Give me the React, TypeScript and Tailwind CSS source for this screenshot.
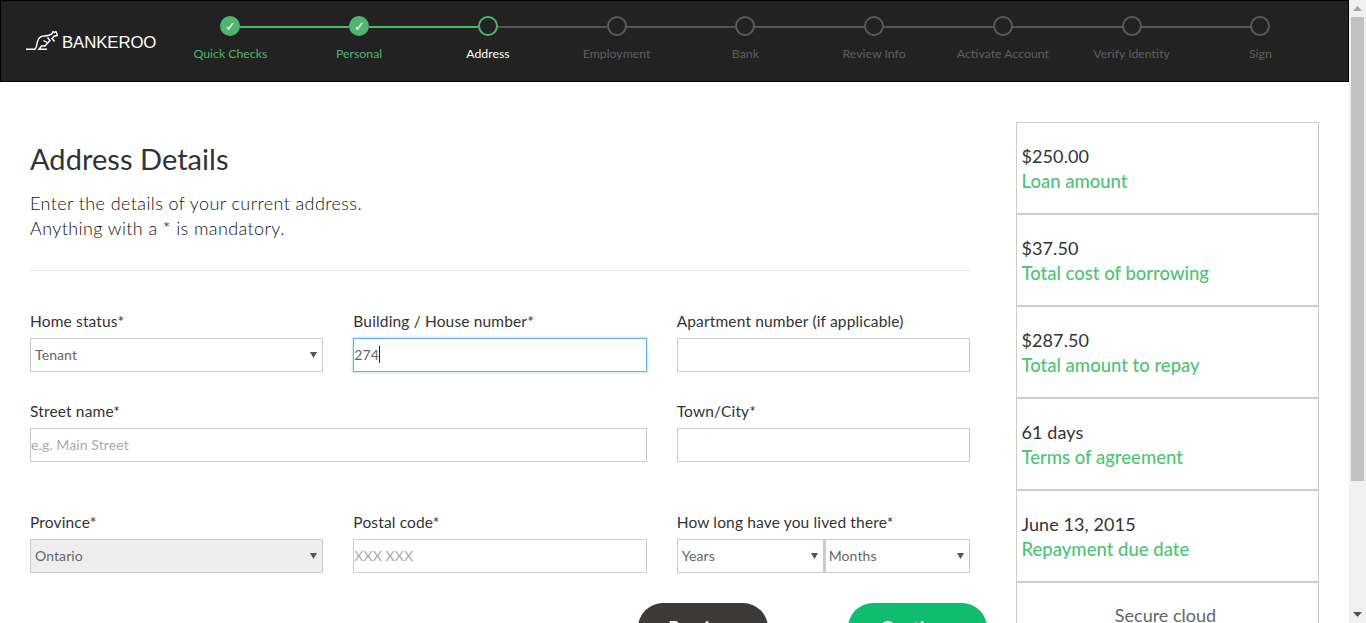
const steps = [
  { label: "Quick Checks", state: "done" },
  { label: "Personal", state: "done" },
  { label: "Address", state: "current" },
  { label: "Employment", state: "todo" },
  { label: "Bank", state: "todo" },
  { label: "Review Info", state: "todo" },
  { label: "Activate Account", state: "todo" },
  { label: "Verify Identity", state: "todo" },
  { label: "Sign", state: "todo" },
];

const summary = [
  { value: "$250.00", label: "Loan amount" },
  { value: "$37.50", label: "Total cost of borrowing" },
  { value: "$287.50", label: "Total amount to repay" },
  { value: "61 days", label: "Terms of agreement" },
  { value: "June 13, 2015", label: "Repayment due date" },
];

function Arrow() {
  return (
    <svg width="7" height="7" viewBox="0 0 7 7" className="shrink-0">
      <path d="M0 1h7L3.500 7z" fill="#555" />
    </svg>
  );
}

function Logo() {
  return (
    <svg width="32" height="20" viewBox="0 0 32 20" fill="none" stroke="#fff" strokeWidth="1.400" className="shrink-0">
      <path d="M0 18.300H8.500C10.500 18.300 10.500 14 11.500 10.500C12.500 7 15 5 18 5C21.500 5 24.500 4.500 26.500 2L27 .5L28.500 1.500L30 .5L31.500 4.500L28.500 5L26 7.500L28.500 10.500" />
      <path d="M21.500 6.500L24 9.500L19 15H15.500L13 18.300H21" />
      <path d="M17.500 9.500L21 11.500" />
    </svg>
  );
}

function Field({ label, children, className = "" }: { label: string; children: React.ReactNode; className?: string }) {
  return (
    <div className={className}>
      <div className="mb-[9px] h-[16px] text-[15.500px] leading-[16px] tracking-[0.15px] whitespace-nowrap text-[#333]">{label}</div>
      {children}
    </div>
  );
}

function Box({ text, placeholder, select, grey, focus, className = "" }: { text?: string; placeholder?: boolean; select?: boolean; grey?: boolean; focus?: boolean; className?: string }) {
  return (
    <div
      className={`relative flex h-[34px] items-center justify-between border pr-[5px] pb-[1px] text-[14px] tracking-[0.1px] ${select ? "pl-1" : "pl-0"} ${focus ? "border-[#66afe9] shadow-[0_0_3px_rgba(102,175,233,0.6)]" : "border-[#ccc]"} ${grey ? "bg-[#eee]" : "bg-white"} ${placeholder ? "text-[#aaa]" : "text-[#666]"} ${className}`}
    >
      <span className="flex items-center">
        {text}
        {focus && <span className="h-[17px] w-px bg-[#222]" />}
      </span>
      {select && <Arrow />}
    </div>
  );
}

export default function App() {
  return (
    <div className="flex h-[623px] w-full overflow-hidden bg-white font-['Lato','Open_Sans',sans-serif]">
      <div className="min-w-0 flex-1">
        <header className="flex h-[82px] items-start border border-black bg-[#222]">
          <div className="flex h-[80px] w-[165px] shrink-0 items-center pl-[25px]">
            <Logo />
            <span className="mt-[5px] ml-[4px] font-['Liberation_Sans',sans-serif] text-[16.800px] leading-none tracking-[-0.1px] text-white">BANKEROO</span>
          </div>
          <div className="flex">
            {steps.map((s, i) => {
              const color = s.state === "todo" ? "#5b5b5b" : "#4fb56f";
              return (
                <div key={s.label} className="relative flex w-[128.750px] flex-col items-center pt-[15px]">
                  {i > 0 && (
                    <div className={`absolute left-[-54.500px] top-[25px] h-[2px] w-[109px] ${s.state === "todo" ? "bg-[#555]" : "bg-[#4fb56f]"}`} />
                  )}
                  <div
                    className="flex h-[20px] w-[20px] items-center justify-center rounded-full border-2"
                    style={{ borderColor: color, background: s.state === "done" ? color : "transparent" }}
                  >
                    {s.state === "done" && <span className="text-[13px] leading-none text-white">✓</span>}
                  </div>
                  <div
                    className={`mt-[9px] text-[12.300px] leading-[18px] whitespace-nowrap ${s.state === "current" ? "text-white" : s.state === "done" ? "text-[#4fb56f]" : "text-[#5f5f5f]"}`}
                  >
                    {s.label}
                  </div>
                </div>
              );
            })}
          </div>
        </header>
        <main className="flex items-start pt-[40px]">
          <section className="ml-[30px] w-[940px] shrink-0">
            <h1 className="mt-[19px] text-[29px] leading-[36px] font-normal tracking-[0.05px] text-[#333]">Address Details</h1>
            <p className="mt-[14px] text-[18px] leading-[25px] font-light tracking-[0.4px] text-[#111]">
              Enter the details of your current address.
              <br />
              Anything with a * is mandatory.
            </p>
            <hr className="mt-[29px] border-[#e5e5e5]" />
            <div className="mt-[42px] grid grid-cols-3 gap-x-[30px]">
              <Field label="Home status*"><Box text="Tenant" select /></Field>
              <Field label="Building / House number*"><Box text="274" focus /></Field>
              <Field label="Apartment number (if applicable)"><Box /></Field>
              <Field label="Street name*" className="col-span-2 mt-[31px]"><Box text="e.g. Main Street" placeholder /></Field>
              <Field label="Town/City*" className="mt-[31px]"><Box /></Field>
              <Field label="Province*" className="mt-[52px]"><Box text="Ontario" select grey /></Field>
              <Field label="Postal code*" className="mt-[52px]"><Box text="XXX XXX" placeholder /></Field>
              <Field label="How long have you lived there*" className="mt-[52px]">
                <div className="flex">
                  <Box text="Years" select className="w-[147px]" />
                  <Box text="Months" select className="flex-1 border-l-[2px] border-l-[#ccc] !pl-[3px]" />
                </div>
              </Field>
            </div>
            <div className="mt-[30px] flex pl-[608px]">
              <div className="flex h-[50px] w-[130px] shrink-0 items-center justify-center rounded-[25px] bg-[#3c3b3a] text-[18px] font-bold text-white">Previous</div>
              <div className="ml-[80px] flex h-[50px] w-[139px] shrink-0 items-center justify-center rounded-[25px] bg-[#10bc6f] text-[18px] font-bold text-white">Continue</div>
            </div>
          </section>
          <aside className="ml-[46px] w-[303px] shrink-0">
            {summary.map((s) => (
              <div key={s.label} className="flex h-[92px] flex-col justify-center border border-[#ccc] pt-[1px] pl-[4.500px]">
                <div className="text-[18px] leading-[25px] tracking-[0.1px] text-[#333]">{s.value}</div>
                <div className="text-[18.500px] leading-[25px] font-medium text-[#4fc373]">{s.label}</div>
              </div>
            ))}
            <div className="h-[92px] border border-[#ccc] pt-[20px] pr-[4px] text-center text-[18px] leading-[25px] text-[#666]">Secure cloud</div>
          </aside>
        </main>
      </div>
      <div className="flex h-[623px] w-[17px] shrink-0 flex-col bg-[#f0f0f0]">
        <div className="flex h-[17px] shrink-0 items-center justify-center">
          <svg width="9" height="5" viewBox="0 0 9 5"><path d="M4.500 0L9 5H0z" fill="#a3a3a3" /></svg>
        </div>
        <div className="mx-[2px] h-[464px] shrink-0 bg-[#c1c1c1]" />
        <div className="flex-1" />
        <div className="flex h-[17px] shrink-0 items-center justify-center">
          <svg width="9" height="5" viewBox="0 0 9 5"><path d="M0 0h9L4.500 5z" fill="#505050" /></svg>
        </div>
      </div>
    </div>
  );
}
